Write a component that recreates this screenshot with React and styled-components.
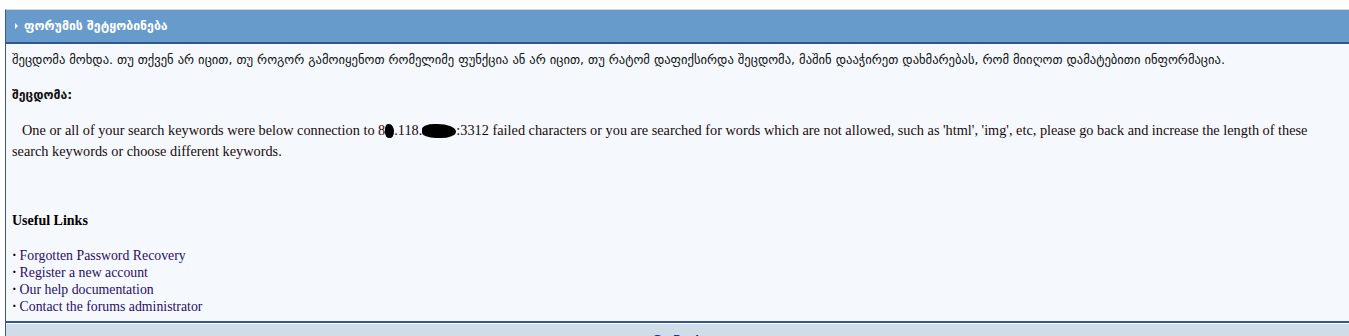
import React from "react";
import styled, { createGlobalStyle } from "styled-components";

const GlobalStyle = createGlobalStyle`
  html, body {
    margin: 0;
    padding: 0;
    background: #ffffff;
    overflow: hidden;
  }
`;

const links = [
  "Forgotten Password Recovery",
  "Register a new account",
  "Our help documentation",
  "Contact the forums administrator",
];

function App() {
  return (
    <>
      <GlobalStyle />
      <Page>
        <Board>
          <Header>
            <Arrow />
            ფორუმის შეტყობინება
          </Header>
          <Body>
            <Intro>
              შეცდომა მოხდა. თუ თქვენ არ იცით, თუ როგორ გამოიყენოთ რომელიმე ფუნქცია ან არ იცით, თუ რატომ დაფიქსირდა შეცდომა, მაშინ დააჭირეთ დახმარებას, რომ მიიღოთ დამატებითი ინფორმაცია.
            </Intro>
            <ErrorLabel>შეცდომა:</ErrorLabel>
            <Message>
              One or all of your search keywords were below connection to 8
              <Blot $w={9} />.118.<Blot $w={34} />:3312 failed characters or you
              are searched for words which are not allowed, such as 'html',
              'img', etc, please go back and increase the length of these search
              keywords or choose different keywords.
            </Message>
            <LinksTitle>Useful Links</LinksTitle>
            <LinkList>
              {links.map((l) => (
                <LinkItem key={l}>
                  <Dot>·</Dot>
                  <Link href="#">{l}</Link>
                </LinkItem>
              ))}
            </LinkList>
          </Body>
          <Footer>
            <BackLink href="#">Go Back</BackLink>
          </Footer>
        </Board>
      </Page>
    </>
  );
}

export default App;

const Page = styled.div`
  padding: 9px 0 0 5px;
  height: 336px;
  box-sizing: border-box;
`;

const Board = styled.div`
  border-top: 1px solid #d4d4d4;
  border-left: 1px solid #3a5a8f;
`;

const Header = styled.div`
  display: flex;
  align-items: center;
  gap: 6px;
  height: 32px;
  padding-left: 9px;
  background: #679bcc;
  border-bottom: 2px solid #34558d;
  color: #ffffff;
  font-family: "DejaVu Sans", Verdana, sans-serif;
  font-weight: bold;
  font-size: 12.3px;
`;

const Arrow = styled.span`
  width: 0;
  height: 0;
  border-top: 3px solid transparent;
  border-bottom: 3px solid transparent;
  border-left: 3px solid #ffffff;
`;

const Body = styled.div`
  background: #f5f9fd;
  padding: 8px 7px 6px 6px;
  border-bottom: 2px solid #34558d;
`;

const Intro = styled.div`
  font-family: "DejaVu Sans", Verdana, sans-serif;
  font-size: 12.6px;
  line-height: 16px;
  color: #111111;
`;

const ErrorLabel = styled.div`
  margin-top: 19px;
  font-family: "DejaVu Sans", Verdana, sans-serif;
  font-weight: bold;
  font-size: 12.3px;
  line-height: 16px;
  color: #111111;
`;

const Message = styled.div`
  margin-top: 17px;
  text-indent: 10px;
  font-family: "Liberation Serif", "Times New Roman", serif;
  font-size: 14.3px;
  line-height: 21px;
  color: #1a0a0a;
`;

const Blot = styled.span`
  display: inline-block;
  width: ${(p) => p.$w}px;
  height: 14px;
  margin-bottom: -3px;
  background: #000000;
  border-radius: 40% 60% 50% 45%;
`;

const LinksTitle = styled.div`
  margin-top: 50px;
  font-family: "Liberation Serif", "Times New Roman", serif;
  font-weight: bold;
  font-size: 14px;
  line-height: 17px;
  color: #000000;
`;

const LinkList = styled.ul`
  list-style: none;
  margin: 18px 0 0;
  padding: 0;
`;

const LinkItem = styled.li`
  display: flex;
  gap: 3px;
  font-family: "Liberation Serif", "Times New Roman", serif;
  font-size: 13.8px;
  line-height: 17px;
`;

const Dot = styled.span`
  color: #000000;
  font-weight: bold;
`;

const Link = styled.a`
  color: #2a0f63;
  text-decoration: none;
`;

const Footer = styled.div`
  background: #d1dce9;
  border-top: 1px solid #ffffff;
  height: 40px;
  display: flex;
  justify-content: center;
  padding-top: 9px;
  box-sizing: border-box;
`;

const BackLink = styled.a`
  font-family: "DejaVu Sans", Verdana, sans-serif;
  font-weight: bold;
  font-size: 11px;
  color: #1c2e90;
  text-decoration: none;
`;
